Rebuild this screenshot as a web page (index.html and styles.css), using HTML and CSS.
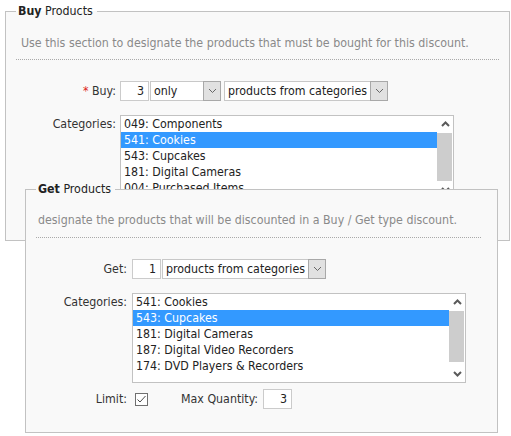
FILE: index.html
```html
<!DOCTYPE html>
<html>
<head>
<meta charset="utf-8">
<link rel="stylesheet" href="styles.css">
</head>
<body>
<div class="page">
  <fieldset class="panel buy">
    <legend><b>Buy</b> Products</legend>
    <div class="desc">Use this section to designate the products that must be bought for this discount.</div>
    <div class="form">
      <div class="lbl"><span class="req">*</span> Buy:</div>
      <div class="ctrls">
        <span class="num">3</span>
        <span class="sel sel-only"><span class="sel-text">only</span><span class="sel-btn"><svg width="9" height="6" viewBox="0 0 9 6"><polyline points="1,1 4.5,4.5 8,1" fill="none" stroke="#666" stroke-width="1"/></svg></span></span>
        <span class="sel sel-prod gap"><span class="sel-text">products from categories</span><span class="sel-btn"><svg width="9" height="6" viewBox="0 0 9 6"><polyline points="1,1 4.5,4.5 8,1" fill="none" stroke="#666" stroke-width="1"/></svg></span></span>
      </div>
      <div class="lbl lbl-top row-list">Categories:</div>
      <div class="list list-buy row-list">
        <div class="items">
          <div class="item">049: Components</div>
          <div class="item selected">541: Cookies</div>
          <div class="item">543: Cupcakes</div>
          <div class="item">181: Digital Cameras</div>
          <div class="item">004: Purchased Items</div>
        </div>
        <div class="sbar">
          <div class="sbtn"><svg width="9" height="6" viewBox="0 0 9 6"><polyline points="1,5 4.5,1.5 8,5" fill="none" stroke="#5a5a5a" stroke-width="2"/></svg></div>
          <div class="track"><div class="thumb thumb-buy"></div></div>
          <div class="sbtn"><svg width="9" height="6" viewBox="0 0 9 6"><polyline points="1,1 4.5,4.5 8,1" fill="none" stroke="#5a5a5a" stroke-width="2"/></svg></div>
        </div>
      </div>
    </div>
  </fieldset>

  <fieldset class="panel get">
    <legend><b>Get</b> Products</legend>
    <div class="desc desc-get">designate the products that will be discounted in a Buy / Get type discount.</div>
    <div class="form form-get">
      <div class="lbl">Get:</div>
      <div class="ctrls">
        <span class="num">1</span>
        <span class="sel sel-prod"><span class="sel-text">products from categories</span><span class="sel-btn"><svg width="9" height="6" viewBox="0 0 9 6"><polyline points="1,1 4.5,4.5 8,1" fill="none" stroke="#666" stroke-width="1"/></svg></span></span>
      </div>
      <div class="lbl lbl-top row-list">Categories:</div>
      <div class="list list-get row-list">
        <div class="items">
          <div class="item">541: Cookies</div>
          <div class="item selected">543: Cupcakes</div>
          <div class="item">181: Digital Cameras</div>
          <div class="item">187: Digital Video Recorders</div>
          <div class="item">174: DVD Players &amp; Recorders</div>
        </div>
        <div class="sbar">
          <div class="sbtn"><svg width="9" height="6" viewBox="0 0 9 6"><polyline points="1,5 4.5,1.5 8,5" fill="none" stroke="#5a5a5a" stroke-width="2"/></svg></div>
          <div class="track"><div class="thumb thumb-get"></div></div>
          <div class="sbtn"><svg width="9" height="6" viewBox="0 0 9 6"><polyline points="1,1 4.5,4.5 8,1" fill="none" stroke="#5a5a5a" stroke-width="2"/></svg></div>
        </div>
      </div>
      <div class="lbl row-limit">Limit:</div>
      <div class="ctrls row-limit">
        <svg class="check" width="13" height="13" viewBox="0 0 13 13"><rect x="0.5" y="0.5" width="12" height="12" fill="#fff" stroke="#707070"/><polyline points="2.5,6.5 5,9 10.5,3" fill="none" stroke="#4a4a4a" stroke-width="1"/></svg>
        <span class="maxlbl">Max Quantity:</span>
        <span class="num">3</span>
      </div>
    </div>
  </fieldset>
</div>
</body>
</html>
```

FILE: styles.css
```css
* { box-sizing: border-box; }

body {
  margin: 0;
  background: #fff;
  font-family: "DejaVu Sans Condensed", "Liberation Sans", sans-serif;
  font-size: 12.3px;
  color: #333;
}

.page {
  position: relative;
  padding: 4px 0 0 5px;
  height: 436px;
}

.panel {
  margin: 0;
  min-width: 0;
  border: 1px solid #c2c2c2;
  background: #f9f9f9;
  padding: 17px 10px 0 10px;
}

.panel legend {
  padding: 0 4px 0 2px;
  line-height: 14px;
  color: #222;
}

.buy {
  width: 505px;
  height: 237px;
}

.get {
  position: absolute;
  left: 25px;
  top: 182px;
  width: 473px;
  height: 251px;
  padding: 15px 16px 0 10px;
}

.desc {
  line-height: 16px;
  color: #8a8a8a;
  padding: 0 0 8px 5px;
  border-bottom: 1px dotted #aaa;
}

.desc-get {
  padding: 1px 0 9px 2px;
}

.form {
  display: grid;
  grid-template-columns: 100px auto;
  column-gap: 4px;
  align-items: center;
  justify-items: start;
  margin-top: 21px;
}

.form-get {
  grid-template-columns: 91px auto;
  column-gap: 5px;
}

.lbl {
  justify-self: end;
  color: #333;
  line-height: 16px;
}

.lbl-top {
  align-self: start;
  padding-top: 1px;
}

.row-list { margin-top: 14px; }
.row-limit { margin-top: 6px; }

.req { color: #d22; }

.ctrls {
  display: flex;
  align-items: center;
}

.num {
  display: block;
  width: 29px;
  height: 20px;
  border: 1px solid #cbcbcb;
  background: #fff;
  text-align: right;
  padding-right: 4px;
  line-height: 18px;
  color: #222;
}

.sel {
  display: flex;
  height: 20px;
  margin-left: 1px;
  border: 1px solid #c8c8c8;
  background: #fff;
  color: #222;
}

.sel.gap { margin-left: 3px; }

.sel-only { width: 71px; }
.sel-prod { width: 164px; }

.sel-text {
  flex: 1;
  padding-left: 3px;
  line-height: 18px;
  white-space: nowrap;
  overflow: hidden;
}

.sel-btn {
  display: flex;
  align-items: center;
  justify-content: center;
  width: 18px;
  background: #e1e1e1;
  border: 1px solid #a8a8a8;
  margin: -1px -1px -1px 0;
}

.list {
  display: flex;
  width: 334px;
  border: 1px solid #c2c2c2;
  background: #fff;
  color: #222;
}

.list-buy { height: 84px; }
.list-get { height: 90px; }

.items {
  flex: 1;
  overflow: hidden;
}

.item {
  height: 16px;
  line-height: 16px;
  padding-left: 3px;
  white-space: nowrap;
}

.item.selected {
  background: #3399ff;
  color: #fff;
}

.sbar {
  width: 16px;
  display: flex;
  flex-direction: column;
  background: #fff;
}

.sbtn {
  height: 16px;
  display: flex;
  align-items: center;
  justify-content: center;
}

.track {
  flex: 1;
  padding-top: 1px;
}

.thumb {
  width: 15px;
  background: #cdcdcd;
}

.thumb-buy { height: 48px; }
.thumb-get { height: 51px; }

.check {
  display: block;
  margin-left: 3px;
}

.maxlbl {
  margin-left: 33px;
  margin-right: 5px;
  line-height: 16px;
}
```
